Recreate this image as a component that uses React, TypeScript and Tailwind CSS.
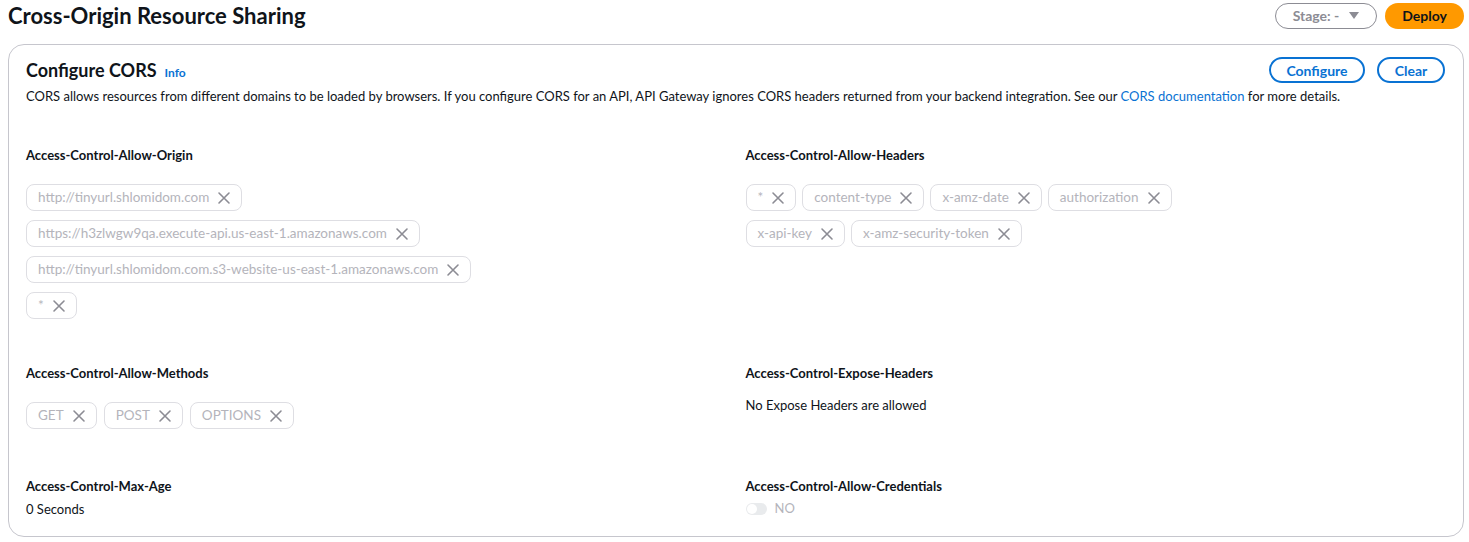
import React from "react";

const XIcon = () => (
  <svg width="16" height="16" viewBox="0 0 16 16" className="shrink-0">
    <path d="M3 3l10 10M13 3L3 13" stroke="#8c8c94" strokeWidth="1.6" fill="none" strokeLinecap="round" />
  </svg>
);

const Token = ({ label }: { label: string }) => (
  <div className="flex h-[27px] items-center gap-[7px] rounded-[8px] border border-[#dedee3] pl-[11px] pr-[9px] text-[13.5px] text-[#b4b4bb]">
    <span>{label}</span>
    <XIcon />
  </div>
);

const Label = ({ children }: { children: React.ReactNode }) => (
  <div className="text-[13px] font-bold leading-[18px] text-[#0f141a]">{children}</div>
);

export default function App() {
  const font = { fontFamily: 'Lato, "Open Sans", sans-serif' };
  return (
    <div className="min-h-[542px] w-[1469px] bg-white pl-[8px] pr-[5px] text-[#0f141a]" style={font}>
      <div className="flex h-[31px] items-center justify-between">
        <h1 className="text-[22px] font-bold leading-[28px]">Cross-Origin Resource Sharing</h1>
        <div className="flex items-center gap-[8px]">
          <button className="flex h-[26px] w-[102px] items-center justify-center gap-[10px] rounded-full border border-[#8c8c94] text-[14px] font-bold text-[#8c8c94]">
            <span>Stage: -</span>
            <svg width="10" height="8" viewBox="0 0 10 8"><path d="M0 0h10L5 7z" fill="#8c8c94" /></svg>
          </button>
          <button className="flex h-[26px] w-[79px] items-center justify-center rounded-full bg-[#ff9900] text-[14px] font-bold text-[#0f141a]">
            Deploy
          </button>
        </div>
      </div>

      <div className="mt-[13px] rounded-[16px] border border-[#c6c6cd] pb-[17px] pl-[17px] pr-[18px] pt-[12px]">
        <div className="flex items-center justify-between">
          <div className="flex items-baseline gap-[8px]">
            <h2 className="text-[18px] font-bold leading-[24px]">Configure CORS</h2>
            <a className="text-[12px] font-bold text-[#0972d3]">Info</a>
          </div>
          <div className="flex items-center gap-[12px]">
            <button className="flex h-[26px] w-[96px] items-center justify-center rounded-full border-2 border-[#0972d3] text-[14px] font-bold text-[#0972d3]">
              Configure
            </button>
            <button className="flex h-[26px] w-[68px] items-center justify-center rounded-full border-2 border-[#0972d3] text-[14px] font-bold text-[#0972d3]">
              Clear
            </button>
          </div>
        </div>
        <p className="mt-[3px] text-[13px] leading-[20px]">
          CORS allows resources from different domains to be loaded by browsers. If you configure CORS for an API, API Gateway ignores CORS headers returned from your backend integration. See our{" "}
          <a className="text-[#0972d3]">CORS documentation</a> for more details.
        </p>

        <div className="mt-[40px] grid grid-cols-2 gap-x-[20px] gap-y-[45px]">
          <div>
            <Label>Access-Control-Allow-Origin</Label>
            <div className="mt-[20px] flex flex-col items-start gap-[9px]">
              <Token label="http://tinyurl.shlomidom.com" />
              <Token label="https://h3zlwgw9qa.execute-api.us-east-1.amazonaws.com" />
              <Token label="http://tinyurl.shlomidom.com.s3-website-us-east-1.amazonaws.com" />
              <Token label="*" />
            </div>
          </div>
          <div>
            <Label>Access-Control-Allow-Headers</Label>
            <div className="mt-[20px] flex flex-wrap gap-x-[6px] gap-y-[9px] pr-[240px]">
              <Token label="*" />
              <Token label="content-type" />
              <Token label="x-amz-date" />
              <Token label="authorization" />
              <Token label="x-api-key" />
              <Token label="x-amz-security-token" />
            </div>
          </div>

          <div>
            <Label>Access-Control-Allow-Methods</Label>
            <div className="mt-[20px] flex gap-[7px]">
              <Token label="GET" />
              <Token label="POST" />
              <Token label="OPTIONS" />
            </div>
          </div>
          <div>
            <Label>Access-Control-Expose-Headers</Label>
            <div className="mt-[13px] text-[13px] leading-[20px]">No Expose Headers are allowed</div>
          </div>

          <div className="mt-[3px]">
            <Label>Access-Control-Max-Age</Label>
            <div className="mt-[4px] text-[13px] leading-[20px]">0 Seconds</div>
          </div>
          <div className="mt-[3px]">
            <Label>Access-Control-Allow-Credentials</Label>
            <div className="mt-[4px] flex h-[20px] items-center gap-[8px]">
              <div className="flex h-[12px] w-[21px] items-center rounded-full bg-[#e9ebed] pl-[1px]">
                <div className="h-[10px] w-[10px] rounded-full bg-white" />
              </div>
              <span className="text-[13px] text-[#b4b4bb]">NO</span>
            </div>
          </div>
        </div>
      </div>
    </div>
  );
}
